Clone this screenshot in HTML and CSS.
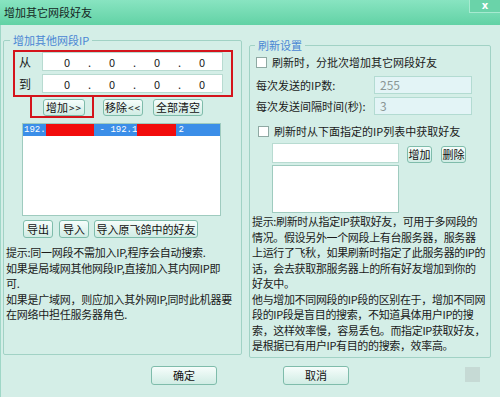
FILE: index.html
```html
<!DOCTYPE html>
<html lang="zh-CN">
<head>
    <meta charset="UTF-8">
    <title>增加其它网段好友</title>
    <link rel="stylesheet" href="styles.css">
</head>
<body>
    <div class="window">
        <div class="titlebar">
            <span class="title">增加其它网段好友</span>
            <span class="close">x</span>
        </div>

        <div class="panels">
            <fieldset class="group group-left">
                <legend>增加其他网段IP</legend>

                <div class="range-box">
                    <div class="range-row">
                        <span class="range-label">从</span>
                        <div class="ip-field">
                            <span class="seg">0</span><span class="dot">.</span>
                            <span class="seg">0</span><span class="dot">.</span>
                            <span class="seg">0</span><span class="dot">.</span>
                            <span class="seg">0</span>
                        </div>
                    </div>
                    <div class="range-row">
                        <span class="range-label">到</span>
                        <div class="ip-field">
                            <span class="seg">0</span><span class="dot">.</span>
                            <span class="seg">0</span><span class="dot">.</span>
                            <span class="seg">0</span><span class="dot">.</span>
                            <span class="seg">0</span>
                        </div>
                    </div>
                </div>

                <div class="action-row">
                    <div class="mark-box"><button class="btn btn-add">增加<span class="arrows">&gt;&gt;</span></button></div>
                    <button class="btn btn-remove">移除<span class="arrows">&lt;&lt;</span></button>
                    <button class="btn btn-clear">全部清空</button>
                </div>

                <div class="listbox range-list">
                    <div class="list-row selected">
                        <span>192.</span><span class="redact r1"></span><span>- 192.1</span><span class="redact r2"></span><span>2</span>
                    </div>
                </div>

                <div class="io-row">
                    <button class="btn btn-export">导出</button>
                    <button class="btn btn-import">导入</button>
                    <button class="btn btn-import-old">导入原飞鸽中的好友</button>
                </div>

                <p class="hint">提示:同一网段不需加入IP,程序会自动搜索.<br>如果是局域网其他网段IP,直接加入其内网IP即<br>可.<br>如果是广域网，则应加入其外网IP,同时此机器要<br>在网络中担任服务器角色.</p>
            </fieldset>

            <fieldset class="group group-right">
                <legend>刷新设置</legend>

                <div class="check-row">
                    <span class="checkbox"></span>
                    <span>刷新时，分批次增加其它网段好友</span>
                </div>

                <div class="field-row">
                    <span class="field-label">每次发送的IP数:</span>
                    <span class="num-input">255</span>
                </div>
                <div class="field-row">
                    <span class="field-label">每次发送间隔时间(秒):</span>
                    <span class="num-input">3</span>
                </div>

                <div class="check-row second">
                    <span class="checkbox"></span>
                    <span>刷新时从下面指定的IP列表中获取好友</span>
                </div>

                <div class="ip-pick">
                    <div class="pick-col">
                        <div class="text-input"></div>
                        <div class="listbox pick-list"></div>
                    </div>
                    <button class="btn btn-small">增加</button>
                    <button class="btn btn-small btn-del">删除</button>
                </div>

                <p class="hint">提示:刷新时从指定IP获取好友，可用于多网段的<br>情况。假设另外一个网段上有台服务器，服务器<br>上运行了飞秋，如果刷新时指定了此服务器的IP的<br>话，会去获取那服务器上的所有好友增加到你的<br>好友中。<br>他与增加不同网段的IP段的区别在于，增加不同网<br>段的IP段是盲目的搜索，不知道具体用户IP的搜<br>索，这样效率慢，容易丢包。而指定IP获取好友，<br>是根据已有用户IP有目的的搜索，效率高。</p>
            </fieldset>
        </div>

        <div class="footer">
            <button class="btn btn-dialog">确定</button>
            <button class="btn btn-dialog">取消</button>
            <span class="corner-mark"></span>
        </div>
    </div>
</body>
</html>
```

FILE: styles.css
```css
* {
    box-sizing: border-box;
}
body {
    margin: 0;
    font-family: "Noto Sans CJK SC", "Noto Sans", sans-serif;
    font-size: 11px;
    color: #1a1a1a;
}
.window {
    position: relative;
    width: 500px;
    height: 397px;
    overflow: hidden;
    background-color: #d4eee7;
    box-shadow: inset 1px 0 #9fd7c7;
}
.titlebar {
    display: flex;
    align-items: flex-start;
    height: 25px;
    background: linear-gradient(#88e4c1, #62d2a5);
}
.title {
    padding: 5px 0 0 4px;
    line-height: 14px;
    color: #14261f;
}
.close {
    margin-left: auto;
    width: 31px;
    height: 13px;
    background-color: #6ad3a9;
    border-left: 1px solid #a6ead0;
    border-bottom: 1px solid #a6ead0;
    color: #fff;
    font: bold 10px/12px "DejaVu Sans", sans-serif;
    text-align: center;
}
.panels {
    display: flex;
    align-items: flex-start;
    height: 333px;
    padding-left: 3px;
}
.group {
    margin: 0;
    padding: 0 2px;
    min-width: 0;
    border: 1px solid #a1d2c5;
    border-radius: 2px;
}
.group legend {
    padding: 0 3px;
    line-height: 14px;
    color: #4a86d4;
}
.group-left {
    width: 239px;
    height: 322px;
    margin-top: 8px;
    padding-top: 3px;
}
.group-left legend {
    margin-left: 4px;
}
.group-right {
    width: 242px;
    height: 320px;
    margin: 13px 0 0 7px;
}
.group-right legend {
    margin-left: 3px;
}

/* IP range input */
.range-box {
    width: 220px;
    margin-left: 7px;
    padding: 0 8px 2px 2px;
    border: 2px solid #d4141c;
}
.range-row {
    display: flex;
    align-items: center;
}
.range-row + .range-row {
    margin-top: 3px;
}
.range-label {
    width: 25px;
    padding-left: 2px;
    font-size: 12px;
}
.ip-field {
    display: flex;
    align-items: center;
    flex: 1;
    height: 19px;
    padding-left: 6px;
    background-color: #fff;
    border: 1px solid #b8dbd1;
}
.seg {
    width: 36px;
    text-align: center;
}
.dot {
    width: 9px;
    text-align: center;
}

/* buttons */
.btn {
    height: 17px;
    padding: 0;
    border: 1px solid #7fbcab;
    border-radius: 3px;
    background: linear-gradient(#f6fdfb, #d0ece4);
    font: inherit;
    line-height: 15px;
    color: #111;
    text-align: center;
}
.arrows {
    margin-left: 1px;
    letter-spacing: 1px;
    font-size: 10px;
}
.action-row {
    display: flex;
    align-items: flex-start;
}
.mark-box {
    width: 64px;
    height: 21px;
    margin-left: 24px;
    padding: 2px 0 0 11px;
    border: 2px solid #d4141c;
    border-top: 0;
}
.btn-add {
    width: 42px;
}
.btn-remove {
    width: 40px;
    margin: 2px 0 0 9px;
}
.btn-clear {
    width: 50px;
    margin: 2px 0 0 10px;
}

/* lists */
.listbox {
    background-color: #fff;
    border: 1px solid #9fcbbf;
}
.range-list {
    width: 199px;
    height: 93px;
    margin: 5px 0 0 16px;
}
.list-row {
    display: flex;
    align-items: center;
    height: 12px;
    padding-left: 1px;
    font: 9px/12px "Liberation Mono", monospace;
}
.list-row.selected {
    background-color: #3b8ee8;
    color: #fff;
}
.redact {
    height: 12px;
    background-color: #f20d0d;
}
.redact.r1 {
    width: 48px;
    margin-right: 6px;
}
.redact.r2 {
    width: 39px;
    margin-right: 2px;
}
.io-row {
    display: flex;
    margin-top: 4px;
}
.io-row .btn {
    height: 18px;
    line-height: 16px;
}
.btn-export {
    width: 30px;
    margin-left: 17px;
}
.btn-import {
    width: 30px;
    margin-left: 6px;
}
.btn-import-old {
    width: 104px;
    margin-left: 5px;
}
.hint {
    margin: 7px 0 0;
    line-height: 15.5px;
    letter-spacing: -0.25px;
    white-space: nowrap;
}

/* refresh settings */
.check-row {
    display: flex;
    align-items: center;
    height: 16px;
    margin-top: 2px;
    padding-left: 4px;
}
.check-row.second {
    margin-top: 8px;
    padding-left: 6px;
}
.checkbox {
    width: 11px;
    height: 11px;
    margin-right: 5px;
    background-color: #fff;
    border: 1px solid #8fa9a3;
}
.field-row {
    display: flex;
    align-items: center;
    margin-top: 6px;
    padding-left: 4px;
}
.field-row + .field-row {
    margin-top: 3px;
}
.field-label {
    width: 118px;
}
.num-input {
    width: 98px;
    height: 18px;
    padding-left: 5px;
    line-height: 16px;
    background-color: #e3f4f6;
    border: 1px solid #b3dbd2;
    color: #8a9795;
    font-size: 12px;
}
.ip-pick {
    display: flex;
    align-items: flex-start;
    margin-top: 4px;
    padding-left: 20px;
}
.pick-col {
    display: flex;
    flex-direction: column;
    gap: 2px;
    width: 127px;
}
.text-input {
    height: 20px;
    background-color: #fff;
    border: 1px solid #b8dbd1;
}
.pick-list {
    height: 48px;
}
.btn-small {
    width: 25px;
    margin: 3px 0 0 8px;
}
.btn-del {
    margin-left: 9px;
}
.group-right .hint {
    margin-top: 1px;
    letter-spacing: -0.35px;
}

/* dialog buttons */
.footer {
    position: relative;
    display: flex;
    justify-content: center;
    gap: 66px;
    padding-top: 8px;
}
.btn-dialog {
    width: 66px;
    height: 19px;
    line-height: 17px;
}
.corner-mark {
    position: absolute;
    top: 9px;
    right: 20px;
    width: 15px;
    height: 15px;
    background-color: #c6dad5;
}
```
